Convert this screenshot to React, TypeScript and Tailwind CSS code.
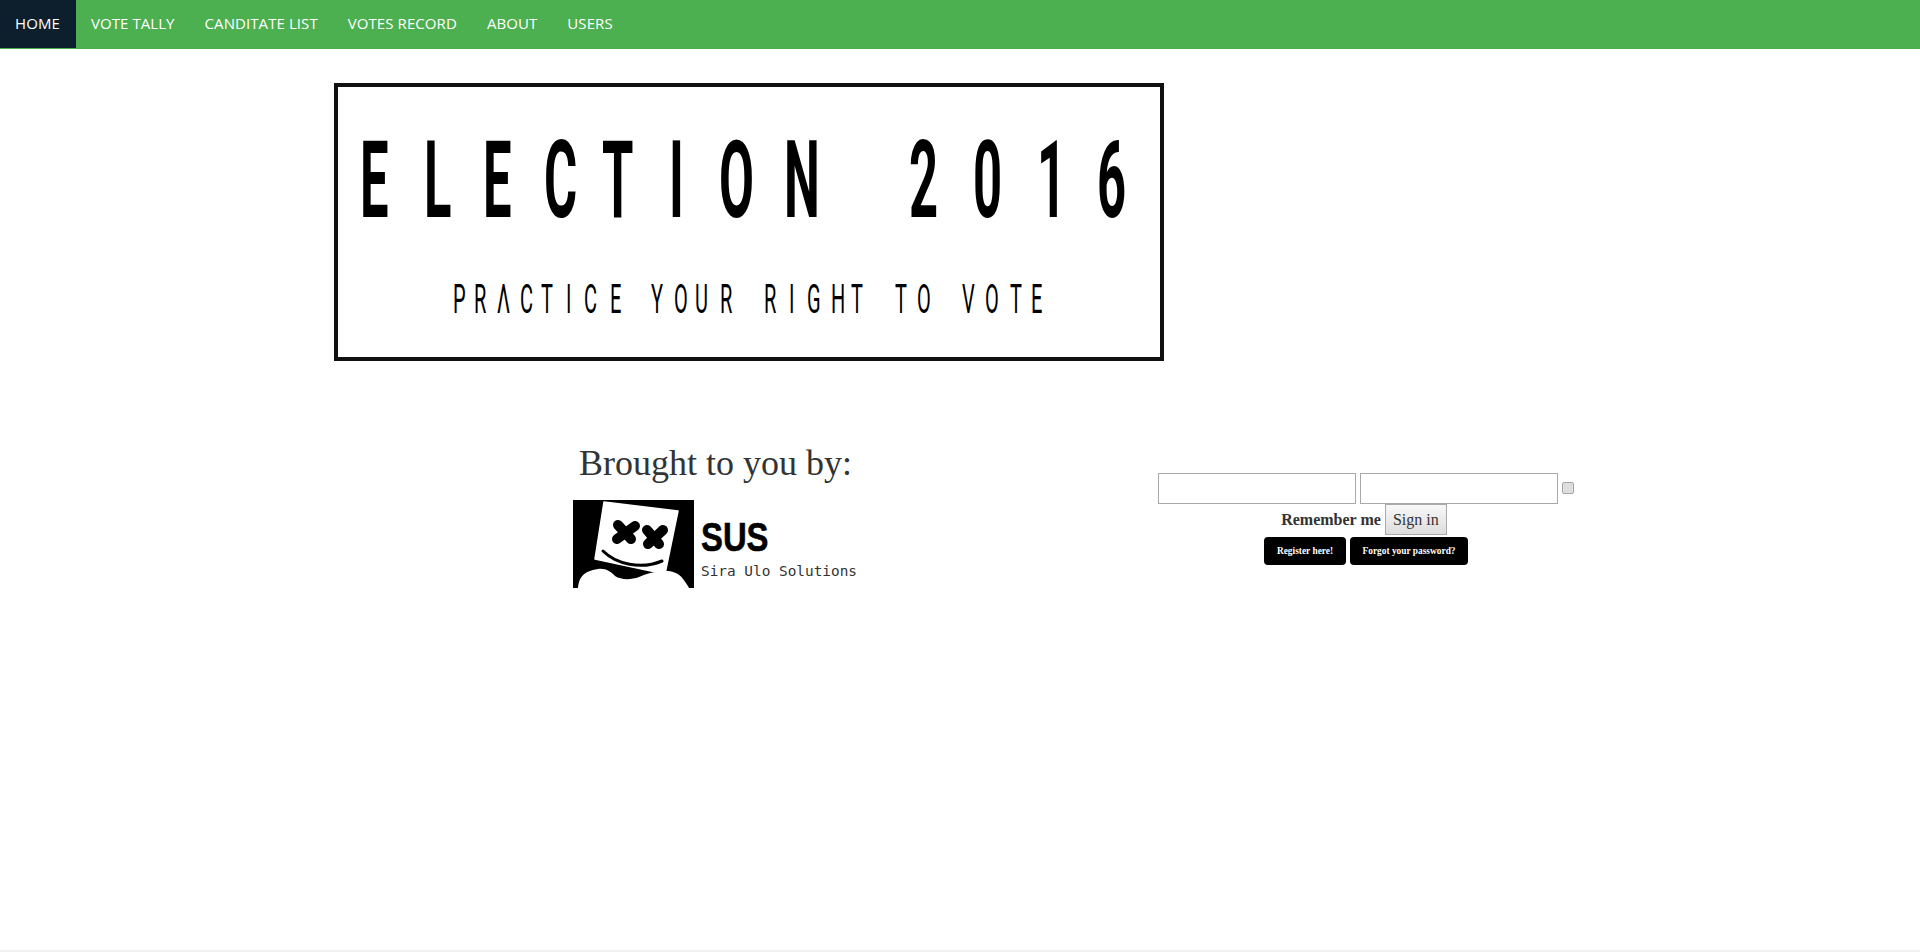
const navItems = ["HOME", "VOTE TALLY", "CANDITATE LIST", "VOTES RECORD", "ABOUT", "USERS"];

// letter start positions follow the banner artwork, width = distance to next letter
const titleLetters = [
  { ch: "E", cls: "w-[64px]" },
  { ch: "L", cls: "w-[59px]" },
  { ch: "E", cls: "w-[61px]" },
  { ch: "C", cls: "w-[58px]" },
  { ch: "T", cls: "w-[67px]" },
  { ch: "I", cls: "w-[50px]" },
  { ch: "O", cls: "w-[65px]" },
  { ch: "N", cls: "w-[125px]" },
  { ch: "2", cls: "w-[64px]" },
  { ch: "0", cls: "w-[64px]" },
  { ch: "1", cls: "w-[60px]" },
  { ch: "6", cls: "w-[24px]" },
];

const sloganLetters = [
  { ch: "P", cls: "w-[21px]" },
  { ch: "R", cls: "w-[23px]" },
  { ch: "Λ", cls: "w-[23px]" },
  { ch: "C", cls: "w-[21px]" },
  { ch: "T", cls: "w-[25px]" },
  { ch: "I", cls: "w-[18px]" },
  { ch: "C", cls: "w-[26px]" },
  { ch: "E", cls: "w-[41px]" },
  { ch: "Y", cls: "w-[23px]" },
  { ch: "O", cls: "w-[21px]" },
  { ch: "U", cls: "w-[25px]" },
  { ch: "R", cls: "w-[44px]" },
  { ch: "R", cls: "w-[25px]" },
  { ch: "I", cls: "w-[18px]" },
  { ch: "G", cls: "w-[24px]" },
  { ch: "H", cls: "w-[20px]" },
  { ch: "T", cls: "w-[44px]" },
  { ch: "T", cls: "w-[22px]" },
  { ch: "O", cls: "w-[45px]" },
  { ch: "V", cls: "w-[23px]" },
  { ch: "O", cls: "w-[25px]" },
  { ch: "T", cls: "w-[21px]" },
  { ch: "E", cls: "w-[10px]" },
];

const MarshLogo = () => (
  <svg width="121" height="88" viewBox="0 0 121 88" className="block shrink-0">
    <rect width="121" height="88" fill="#000" />
    <path d="M5 88 C6 78 10 71 25 69 C33 68 38 72 42 76 C48 80 58 80 66 77 C72 74 80 72 88 71 C98 70 106 73 110 79 C113 83 115 86 116 88 Z" fill="#fff" />
    <path d="M31 2 L105 11 L92 74 L22 59 Z" fill="#fff" stroke="#fff" strokeWidth="1.5" strokeLinejoin="round" />
    <g stroke="#000" strokeWidth="10" strokeLinecap="round">
      <path d="M45 25 L58 39" />
      <path d="M62 26 L44 39" />
      <path d="M74 30 L86 44" />
      <path d="M90 30 L75 44" />
    </g>
    <path d="M30 51 C43 64 68 70 89 61" fill="none" stroke="#000" strokeWidth="3" strokeLinecap="round" />
  </svg>
);

const App = () => {
  return (
    <div className="min-h-[952px] flex flex-col bg-white font-['Liberation_Serif',serif] text-[#333]">
      <nav className="h-[49px] bg-[#4caf50] flex items-start font-['Open_Sans',sans-serif] text-[15px] tracking-[0.08px] text-white">
        {navItems.map((item, i) => (
          <a
            key={item}
            href="#"
            className={`h-[48px] flex items-center px-[15px] pb-[2px] ${i === 0 ? "bg-[#0d1f2d] pr-[16px]" : ""}`}
          >
            {item}
          </a>
        ))}
      </nav>

      <main className="flex-1 pl-[334px] pt-[34px]">
        <div
          aria-label="ELECTION 2016 PRACTICE YOUR RIGHT TO VOTE"
          className="w-[830px] h-[278px] border-4 border-[#111] font-['Roboto',sans-serif] text-black"
        >
          <div className="flex h-[78px] mt-[54px] ml-[22px] text-[108px] leading-[78px] font-bold">
            {titleLetters.map((l, i) => (
              <span key={i} className={`${l.cls} shrink-0`}>
                <span className="inline-block origin-left scale-x-[0.47]">{l.ch}</span>
              </span>
            ))}
          </div>
          <div className="flex h-[30px] mt-[66px] ml-[115px] text-[40px] leading-[30px]">
            {sloganLetters.map((l, i) => (
              <span key={i} className={`${l.cls} shrink-0`}>
                <span className="inline-block origin-left scale-x-[0.5]">{l.ch}</span>
              </span>
            ))}
          </div>
        </div>

        <div className="flex mt-[79px]">
          <div className="w-[763px] flex flex-col items-center">
            <h2 className="text-[36px] leading-[46px] font-normal">Brought to you by:</h2>
            <div className="flex mt-[14px] mr-[1px]">
              <MarshLogo />
              <div className="ml-[7px] pt-[17px]">
                <div className="text-[40px] leading-[40px] font-bold font-['Liberation_Sans',sans-serif] text-black origin-left scale-x-[0.82] [-webkit-text-stroke:0.6px_black]">SUS</div>
                <div className="text-[14.4px] leading-[18px] font-['DejaVu_Sans_Mono',monospace] mt-[5px]">Sira Ulo Solutions</div>
              </div>
            </div>
          </div>

          <form className="ml-[60px] w-[418px] mt-[33px] flex flex-col items-center">
            <div className="flex items-center gap-[4px]">
              <input type="text" className="w-[198px] h-[31px] border border-[#a9a9a9] bg-white" />
              <input type="text" className="w-[198px] h-[31px] border border-[#a9a9a9] bg-white" />
              <input type="checkbox" className="appearance-none w-[12px] h-[12px] mb-[2px] bg-[#dedede] border border-[#a6a6a6] rounded-[2px]" />
            </div>
            <div className="flex items-center gap-[4px] mr-[4px]">
              <label className="font-bold text-[16px]">Remember me</label>
              <button type="button" className="h-[31px] w-[62px] border border-[#aaa] bg-linear-to-b from-[#f8f8f8] to-[#dddddd] text-[16px]">
                Sign in
              </button>
            </div>
            <div className="flex gap-[4px] mt-[2px] text-white text-[9.4px] font-bold">
              <a href="#" className="h-[28px] w-[82px] bg-black rounded-[4px] flex items-center justify-center">Register here!</a>
              <a href="#" className="h-[28px] w-[118px] bg-black rounded-[4px] flex items-center justify-center">Forgot your password?</a>
            </div>
          </form>
        </div>
      </main>

      <div className="h-[2px] bg-[#f1f1f1]" />
    </div>
  );
};

export default App;
